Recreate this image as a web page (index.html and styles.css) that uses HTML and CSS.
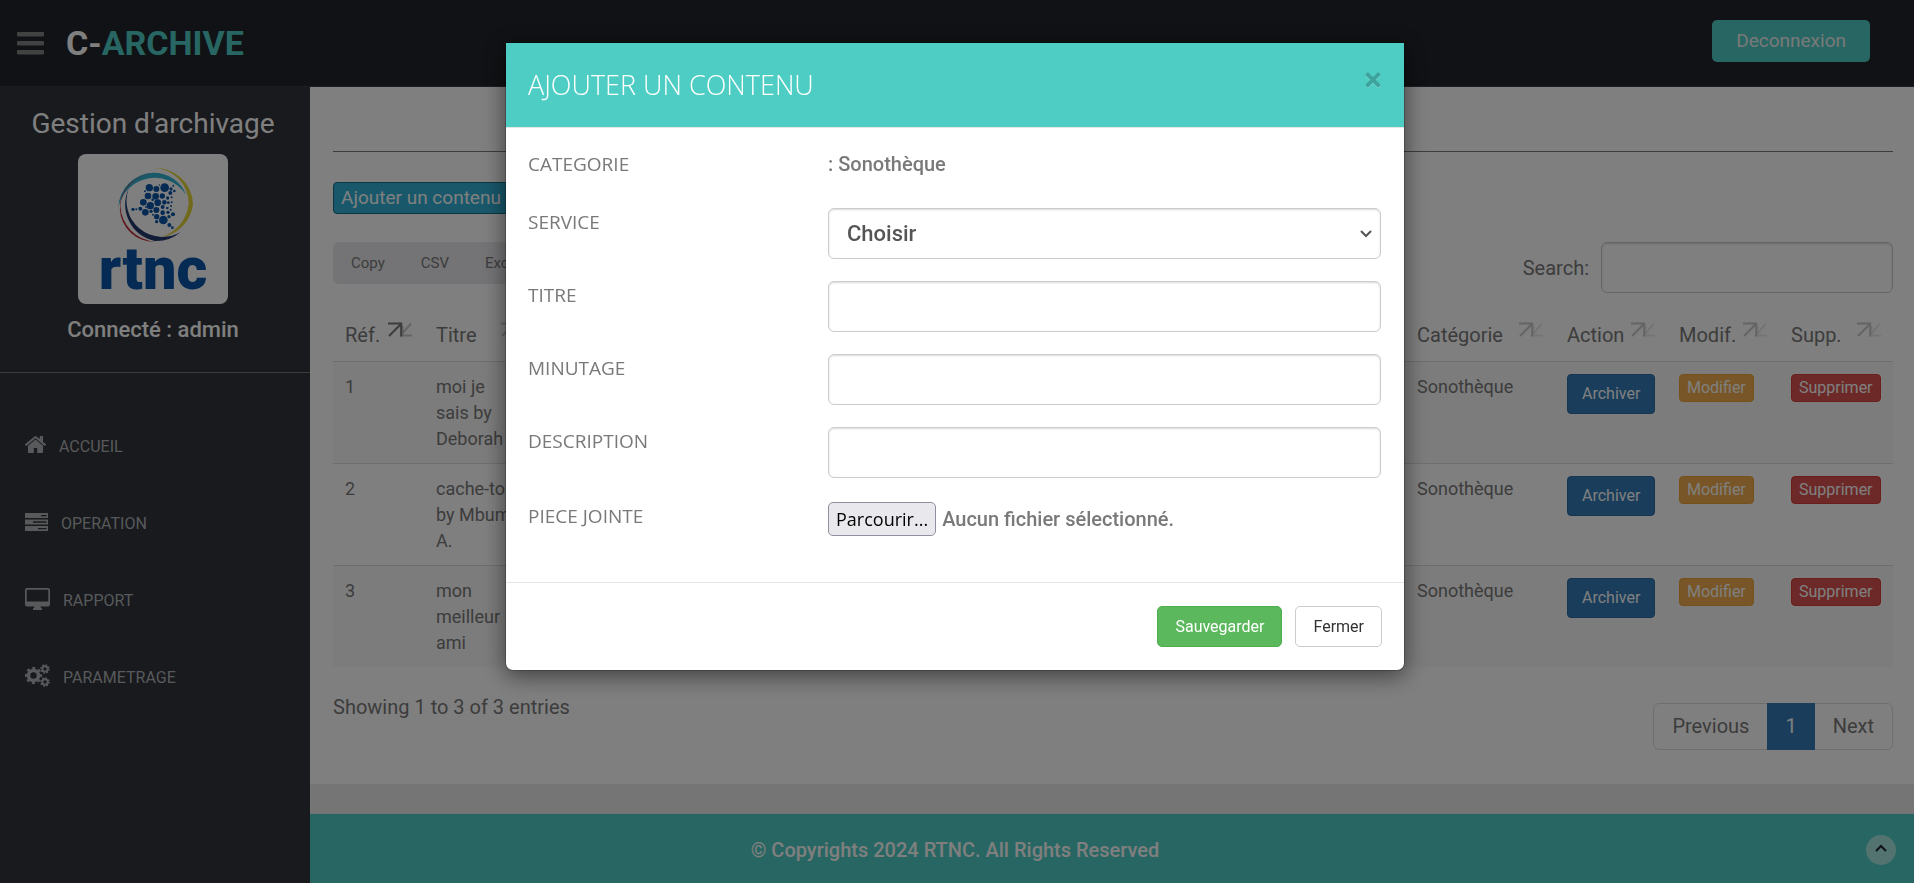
FILE: index.html
```html
<!DOCTYPE html>
<html lang="fr">
<head>
    <meta charset="UTF-8">
    <meta name="viewport" content="width=device-width, initial-scale=1.0">
    <title>C-ARCHIVE</title>
    <link rel="stylesheet" href="styles.css">
</head>
<body>
    <svg class="sprite" aria-hidden="true">
        <symbol id="sort" viewBox="0 0 24 15">
            <path class="sort-asc" d="M0 1.500H14M13.200 1V14.500M1 14L13 2" />
            <path class="sort-desc" d="M12 13.500H24M14.500 4V14M23 1.500L14 12" />
        </symbol>
    </svg>

    <header class="header">
        <button class="menu-toggle" aria-label="Menu">
            <svg width="27" height="23" viewBox="0 0 27 23" fill="currentColor"><rect y="0" width="27" height="4.500" rx="1"/><rect y="9" width="27" height="4.500" rx="1"/><rect y="18" width="27" height="4.500" rx="1"/></svg>
        </button>
        <a href="#" class="logo">C-<span>ARCHIVE</span></a>
        <a href="#" class="logout">Deconnexion</a>
    </header>

    <div class="layout">
        <!-- sidebar -->
        <aside class="sidebar">
            <h2 class="sidebar-title">Gestion d'archivage</h2>
            <svg class="sidebar-logo" viewBox="0 0 450 450" role="img" aria-label="rtnc">
                <rect width="450" height="450" fill="#fff"/>
                <path fill="#35b3d3" d="M121 160A112 112 0 0 1 324 122A104 104 0 0 0 225 56A108 108 0 0 0 121 160Z"/>
                <path fill="#e3d43a" d="M225 42A112 112 0 0 1 345 150A114 114 0 0 1 250 250Q322 222 332 150A106 106 0 0 0 225 42Z"/>
                <path fill="#c02a35" d="M222 60A100 100 0 0 0 232 263A112 112 0 0 1 127 155A104 104 0 0 1 222 60Z"/>
                <path fill="#22386f" d="M152 104A108 108 0 0 0 308 234A112 112 0 0 1 230 261A112 112 0 0 1 152 104Z"/>
                <g fill="#0a56a8">
                    <circle cx="214" cy="101" r="11"/><circle cx="235" cy="105" r="9"/><circle cx="260" cy="101" r="13"/>
                    <circle cx="279" cy="105" r="5"/><circle cx="289" cy="111" r="4"/><circle cx="277" cy="117" r="6"/>
                    <circle cx="286" cy="95" r="3"/><circle cx="244" cy="93" r="2"/><circle cx="201" cy="112" r="3"/>
                    <circle cx="210" cy="126" r="10"/><circle cx="233" cy="127" r="10"/><circle cx="253" cy="126" r="8"/>
                    <circle cx="269" cy="132" r="5"/><circle cx="281" cy="130" r="3"/><circle cx="196" cy="145" r="10"/>
                    <circle cx="217" cy="155" r="11"/><circle cx="239" cy="146" r="10"/><circle cx="259" cy="145" r="7"/>
                    <circle cx="271" cy="146" r="4"/><circle cx="281" cy="145" r="3"/><circle cx="187" cy="164" r="6"/>
                    <circle cx="175" cy="166" r="3"/><circle cx="165" cy="166" r="5"/><circle cx="202" cy="175" r="10"/>
                    <circle cx="219" cy="172" r="5"/><circle cx="235" cy="168" r="9"/><circle cx="254" cy="159" r="6"/>
                    <circle cx="268" cy="162" r="4"/><circle cx="279" cy="156" r="3"/><circle cx="278" cy="167" r="3"/>
                    <circle cx="254" cy="176" r="7"/><circle cx="270" cy="175" r="5"/><circle cx="285" cy="181" r="6"/>
                    <circle cx="236" cy="188" r="8"/><circle cx="256" cy="198" r="13"/><circle cx="273" cy="188" r="5"/>
                    <circle cx="236" cy="203" r="5"/><circle cx="274" cy="213" r="6"/><circle cx="283" cy="221" r="4"/>
                    <circle cx="224" cy="137" r="4"/><circle cx="204" cy="159" r="3"/><circle cx="225" cy="182" r="3"/>
                </g>
                <text class="logo-word" x="225" y="406" text-anchor="middle">rtnc</text>
            </svg>
            <p class="sidebar-user">Connecté : admin</p>
            <nav class="menu">
                <a href="#" class="menu-item">
                    <svg width="21" height="17" viewBox="97 250 1598 1290" fill="currentColor"><path d="M1472 992v480q0 26-19 45t-45 19h-384v-384h-256v384h-384q-26 0-45-19t-19-45v-480q0-1 .5-3t.5-3l575-474 575 474q1 2 1 6zm223-69l-62 74q-8 9-21 11h-3q-13 0-21-7l-692-577-692 577q-12 8-24 7-13-2-21-11l-62-74q-8-10-7-23.500t11-21.500l719-599q32-26 76-26t76 26l244 204v-195q0-14 9-23t23-9h192q14 0 23 9t9 23v408l219 182q10 8 11 21.500t-7 23.500z"/></svg>
                    ACCUEIL
                </a>
                <a href="#" class="menu-item">
                    <svg width="23" height="18" viewBox="0 0 23 18" fill="currentColor" fill-rule="evenodd"><path d="M0 0H23V5H0ZM16 2V3.300H21.500V2ZM0 6.500H23V11.500H0ZM8 8.200V9.800H21.500V8.200ZM0 13H23V18H0ZM13 15V16.300H21.500V15Z"/></svg>
                    OPERATION
                </a>
                <a href="#" class="menu-item">
                    <svg width="25" height="22" viewBox="0 0 25 22" fill="currentColor" fill-rule="evenodd"><path d="M2 0H23Q25 0 25 2V16.500Q25 18.500 23 18.500H15.500Q15.500 20 17 20.500V22H8V20.500Q9.500 20 9.500 18.500H2Q0 18.500 0 16.500V2Q0 0 2 0ZM2.200 1.700Q1.700 1.700 1.700 2.200V13.500H23.300V2.200Q23.300 1.700 22.800 1.700Z"/></svg>
                    RAPPORT
                </a>
                <a href="#" class="menu-item">
                    <svg width="25" height="23" viewBox="0 0 25 23" fill="none" stroke="currentColor">
                        <circle cx="8.500" cy="11.500" r="5" stroke-width="3.600"/><circle cx="8.500" cy="11.500" r="7.300" stroke-width="2.600" stroke-dasharray="2.870 2.863" stroke-dashoffset="1.400"/>
                        <circle cx="20" cy="5" r="2.700" stroke-width="1.900"/><circle cx="20" cy="5" r="4.100" stroke-width="1.500" stroke-dasharray="1.610 1.610"/>
                        <circle cx="20" cy="18" r="2.700" stroke-width="1.900"/><circle cx="20" cy="18" r="4.100" stroke-width="1.500" stroke-dasharray="1.610 1.610"/>
                    </svg>
                    PARAMETRAGE
                </a>
            </nav>
        </aside>

        <!-- page content -->
        <div class="page">
            <main class="content">
                <hr class="divider">
                <button class="btn-add">Ajouter un contenu</button>

                <div class="toolbar">
                    <div class="export-group">
                        <button>Copy</button><button>CSV</button><button>Excel</button>
                    </div>
                    <div class="search">
                        <label for="search">Search:</label>
                        <input type="search" id="search" class="form-control">
                    </div>
                </div>

                <table class="table">
                    <colgroup>
                        <col class="col-ref"><col class="col-titre"><col><col class="col-cat"><col class="col-action"><col class="col-modif"><col class="col-supp">
                    </colgroup>
                    <thead>
                        <tr>
                            <th><div>Réf. <svg class="sort active"><use href="#sort"/></svg></div></th>
                            <th><div>Titre <svg class="sort"><use href="#sort"/></svg></div></th>
                            <th></th>
                            <th><div>Catégorie <svg class="sort"><use href="#sort"/></svg></div></th>
                            <th><div>Action <svg class="sort"><use href="#sort"/></svg></div></th>
                            <th><div>Modif. <svg class="sort"><use href="#sort"/></svg></div></th>
                            <th><div>Supp. <svg class="sort"><use href="#sort"/></svg></div></th>
                        </tr>
                    </thead>
                    <tbody>
                        <tr>
                            <td>1</td>
                            <td>moi je<br>sais by<br>Deborah</td>
                            <td></td>
                            <td>Sonothèque</td>
                            <td><button class="btn-row btn-primary">Archiver</button></td>
                            <td><button class="btn-row btn-warning">Modifier</button></td>
                            <td><button class="btn-row btn-danger">Supprimer</button></td>
                        </tr>
                        <tr>
                            <td>2</td>
                            <td>cache-toi<br>by Mbum<br>A.</td>
                            <td></td>
                            <td>Sonothèque</td>
                            <td><button class="btn-row btn-primary">Archiver</button></td>
                            <td><button class="btn-row btn-warning">Modifier</button></td>
                            <td><button class="btn-row btn-danger">Supprimer</button></td>
                        </tr>
                        <tr>
                            <td>3</td>
                            <td>mon<br>meilleur<br>ami</td>
                            <td></td>
                            <td>Sonothèque</td>
                            <td><button class="btn-row btn-primary">Archiver</button></td>
                            <td><button class="btn-row btn-warning">Modifier</button></td>
                            <td><button class="btn-row btn-danger">Supprimer</button></td>
                        </tr>
                    </tbody>
                </table>

                <div class="table-footer">
                    <p>Showing 1 to 3 of 3 entries</p>
                    <div class="pagination">
                        <a href="#">Previous</a><a href="#" class="current">1</a><a href="#">Next</a>
                    </div>
                </div>
            </main>

            <footer class="footer">
                <p>© Copyrights 2024 RTNC. All Rights Reserved</p>
                <a href="#" class="go-top" aria-label="Haut de page">
                    <svg width="12" height="8" viewBox="0 0 12 8" fill="none" stroke="currentColor" stroke-width="2"><path d="M1 7L6 2L11 7"/></svg>
                </a>
            </footer>
        </div>
    </div>

    <!-- modal -->
    <div class="backdrop">
        <form class="modal" role="dialog" aria-labelledby="modalTitle">
            <div class="modal-header">
                <h4 id="modalTitle">AJOUTER UN CONTENU</h4>
                <button type="button" class="close" aria-label="Fermer">×</button>
            </div>
            <div class="modal-body">
                <div class="form-row">
                    <span class="form-label">CATEGORIE</span>
                    <span class="form-value">: Sonothèque</span>
                </div>
                <div class="form-row">
                    <label class="form-label" for="service">SERVICE</label>
                    <div class="select-wrap">
                        <select id="service" class="form-control">
                            <option>Choisir</option>
                        </select>
                        <svg width="12" height="8" viewBox="0 0 12 8" fill="none" stroke="currentColor" stroke-width="2"><path d="M1 1L6 6L11 1"/></svg>
                    </div>
                </div>
                <div class="form-row">
                    <label class="form-label" for="titre">TITRE</label>
                    <input type="text" id="titre" class="form-control">
                </div>
                <div class="form-row">
                    <label class="form-label" for="minutage">MINUTAGE</label>
                    <input type="text" id="minutage" class="form-control">
                </div>
                <div class="form-row">
                    <label class="form-label" for="description">DESCRIPTION</label>
                    <input type="text" id="description" class="form-control">
                </div>
                <div class="form-row form-row-file">
                    <span class="form-label">PIECE JOINTE</span>
                    <div class="file-field">
                        <input type="file" id="piece" class="file-input">
                        <label for="piece" class="file-btn">Parcourir...</label>
                        <span class="form-value">Aucun fichier sélectionné.</span>
                    </div>
                </div>
            </div>
            <div class="modal-footer">
                <button type="submit" class="btn btn-success">Sauvegarder</button>
                <button type="button" class="btn btn-default">Fermer</button>
            </div>
        </form>
    </div>
</body>
</html>
```
FILE: styles.css
```css
* {
    box-sizing: border-box;
}
body {
    margin: 0;
    min-height: 100vh;
    display: flex;
    flex-direction: column;
    font-family: Roboto, sans-serif;
    font-size: 20px;
    line-height: 28px;
    color: #797979;
    background: #eaeaea;
}
a {
    color: inherit;
    text-decoration: none;
}
p, h2, h4 {
    margin: 0;
}
button, input, select {
    font-family: inherit;
    font-size: inherit;
    line-height: inherit;
}
button {
    cursor: pointer;
}
.sprite {
    display: none;
}

/* header */
.header {
    display: flex;
    align-items: center;
    height: 87px;
    padding: 0 44px 0 17px;
    background: #22242a;
    border-bottom: 1px solid #393d42;
}
.menu-toggle {
    display: flex;
    padding: 0;
    margin-right: 22px;
    border: none;
    background: none;
    color: #848484;
}
.logo {
    color: #fff;
    font-size: 34px;
    font-weight: 700;
}
.logo span {
    color: #4ecdc4;
}
.logout {
    margin: 0 0 5px auto;
    padding: 7px 24px;
    border-radius: 5px;
    background: #4ecdc4;
    color: #f2f2f2;
    font-size: 19px;
}

/* sidebar */
.layout {
    display: flex;
    flex: 1;
}
.sidebar {
    flex: 0 0 310px;
    display: flex;
    flex-direction: column;
    align-items: center;
    padding-top: 21px;
    background: #32343a;
    color: #fff;
}
.sidebar-title, .sidebar-logo, .sidebar-user {
    margin-right: 4px;
}
.sidebar-title {
    font-size: 28px;
    font-weight: 400;
    line-height: 32px;
    margin-bottom: 14px;
}
.sidebar-logo {
    width: 150px;
    height: 150px;
    border-radius: 8px;
}
.logo-word {
    font-size: 178px;
    font-weight: 900;
    fill: #0a56a8;
}
.sidebar-user {
    margin-top: 12px;
    font-size: 22px;
    font-weight: 500;
}
.menu {
    align-self: stretch;
    margin-top: 28px;
    padding-top: 44px;
    border-top: 1px solid #797979;
}
.menu-item {
    display: flex;
    align-items: center;
    gap: 13px;
    height: 77px;
    padding-left: 25px;
    padding-bottom: 18px;
    font-size: 16px;
    color: #aeb2b7;
}
.menu-item svg {
    margin-bottom: 4px;
}

/* content */
.page {
    flex: 1;
    display: flex;
    flex-direction: column;
    min-width: 0;
}
.content {
    padding: 64px 21px 34px 23px;
    margin-bottom: 30px;
    background: #fff;
}
.divider {
    margin: 0 0 30px;
    border: none;
    border-top: 1px solid #797979;
}
.btn-add {
    display: block;
    height: 32px;
    padding: 0 7px;
    border: 1px solid #1b6d85;
    border-radius: 4px;
    background: #31b0d5;
    color: #fff;
    font-size: 19px;
}
.toolbar {
    display: flex;
    justify-content: space-between;
    align-items: flex-start;
    margin: 28px 0 17px;
}
.export-group {
    display: flex;
    border-radius: 6px;
    background: #e9e9ed;
}
.export-group button {
    height: 42px;
    padding: 0 18px;
    border: none;
    background: none;
    color: #797979;
    font-size: 15px;
}
.search {
    display: flex;
    align-items: center;
    gap: 12px;
}
.search .form-control {
    width: 292px;
}
.form-control {
    width: 100%;
    height: 51px;
    padding: 0 18px;
    border: 1px solid #ccc;
    border-radius: 6px;
    background: #fff;
    box-shadow: inset 0 1px 2px rgba(0,0,0,0.15);
    color: #555;
}

/* table */
.table {
    width: 100%;
    table-layout: fixed;
    border-collapse: collapse;
    line-height: 26px;
}
.table th, .table td {
    padding: 12px 12px 11px;
    text-align: left;
    vertical-align: top;
}
.table th {
    font-weight: 400;
    padding-bottom: 13px;
}
.table th div {
    display: flex;
    justify-content: space-between;
}
.table td {
    border-top: 1px solid #ddd;
    font-size: 18px;
}
.table tbody tr:nth-child(odd) {
    background: #f9f9f9;
}
.col-ref {
    width: 91px;
}
.col-titre {
    width: 113px;
}
.col-cat {
    width: 150px;
}
.col-action {
    width: 112px;
}
.col-modif {
    width: 112px;
}
.col-supp {
    width: 114px;
}
.sort {
    width: 24px;
    height: 15px;
    flex: none;
    fill: none;
    stroke: #797979;
    stroke-width: 2px;
    opacity: 0.4;
}
.sort.active {
    opacity: 1;
}
.sort-desc {
    opacity: 0.4;
}
.btn-row {
    display: block;
    height: 28px;
    padding: 0 7px;
    border: 1px solid;
    border-radius: 4px;
    color: #fff;
    font-size: 16px;
    line-height: 24px;
}
.btn-primary {
    height: 40px;
    padding: 0 14px;
    background: #337ab7;
    border-color: #2e6da4;
}
.btn-warning {
    background: #f0ad4e;
    border-color: #eea236;
}
.btn-danger {
    background: #d9534f;
    border-color: #d43f3a;
}
.table-footer {
    display: flex;
    justify-content: space-between;
    align-items: flex-start;
    padding-top: 26px;
}
.pagination {
    display: flex;
    margin-top: 10px;
    border: 1px solid #ddd;
    border-radius: 6px;
}
.pagination a {
    padding: 8px 18px 9px;
}
.pagination .current {
    margin: -1px 0;
    padding-top: 9px;
    padding-bottom: 10px;
    background: #337ab7;
    color: #fff;
}

/* footer */
.footer {
    flex: 1;
    position: relative;
    min-height: 69px;
    padding: 22px 314px 18px 0;
    background: #4ecdc4;
    color: #fff;
    font-weight: 500;
    text-align: center;
}
.go-top {
    position: absolute;
    right: 18px;
    bottom: 18px;
    display: flex;
    align-items: center;
    justify-content: center;
    width: 30px;
    height: 30px;
    padding-bottom: 4px;
    border-radius: 50%;
    background: rgba(255,255,255,0.5);
    color: #22242a;
}

/* modal */
.backdrop {
    position: fixed;
    inset: 0;
    padding: 42px 4px 0 0;
    background: rgba(0,0,0,0.5);
}
.modal {
    width: 900px;
    max-width: 100%;
    margin: 0 auto;
    background: #fff;
    background-clip: padding-box;
    border: 1px solid rgba(0,0,0,0.2);
    border-radius: 0 0 8px 8px;
    box-shadow: 0 5px 22px rgba(0,0,0,0.5);
}
.modal-header {
    display: flex;
    justify-content: space-between;
    align-items: flex-start;
    padding: 22px;
    background: #4ecdc4;
    background-clip: padding-box;
    border-bottom: 1px solid #e5e5e5;
}
.modal-header h4 {
    font-family: "Open Sans", sans-serif;
    font-size: 27px;
    font-weight: 300;
    line-height: 40px;
    color: #fff;
}
.close {
    padding: 0;
    border: none;
    background: none;
    color: #000;
    font-size: 34px;
    font-weight: 700;
    text-shadow: 0 1px 0 #fff;
    opacity: 0.2;
}
.modal-body {
    display: flex;
    flex-direction: column;
    gap: 22px;
    padding: 22px 23px 46px 22px;
}
.form-row {
    display: grid;
    grid-template-columns: 300px 1fr;
    align-items: start;
}
.form-row:first-child {
    height: 36px;
}
.form-row-file {
    padding-top: 2px;
}
.form-label {
    font-family: "Open Sans", sans-serif;
    font-size: 19px;
}
.form-value {
    font-weight: 500;
}
.select-wrap {
    position: relative;
}
.select-wrap select {
    appearance: none;
    font-size: 22px;
    font-weight: 500;
}
.select-wrap svg {
    position: absolute;
    right: 9px;
    top: 22px;
    color: #555;
    pointer-events: none;
}
.file-field {
    display: flex;
    align-items: center;
    gap: 6px;
}
.file-input {
    position: absolute;
    width: 1px;
    height: 1px;
    opacity: 0;
}
.file-btn {
    padding: 2px 7px;
    border: 1px solid #8f8f9d;
    border-radius: 5px;
    background: #e9e9ed;
    color: #000;
    font-family: "Open Sans", sans-serif;
    font-size: 18px;
}
.modal-footer {
    display: flex;
    justify-content: flex-end;
    gap: 13px;
    padding: 23px 22px;
    border-top: 1px solid #e5e5e5;
}
.btn {
    height: 41px;
    padding: 0 17px;
    border: 1px solid #ccc;
    border-radius: 5px;
    font-size: 16px;
}
.btn-success {
    background: #5cb85c;
    border-color: #4cae4c;
    color: #fff;
}
.btn-default {
    background: #fff;
    color: #333;
}
```
